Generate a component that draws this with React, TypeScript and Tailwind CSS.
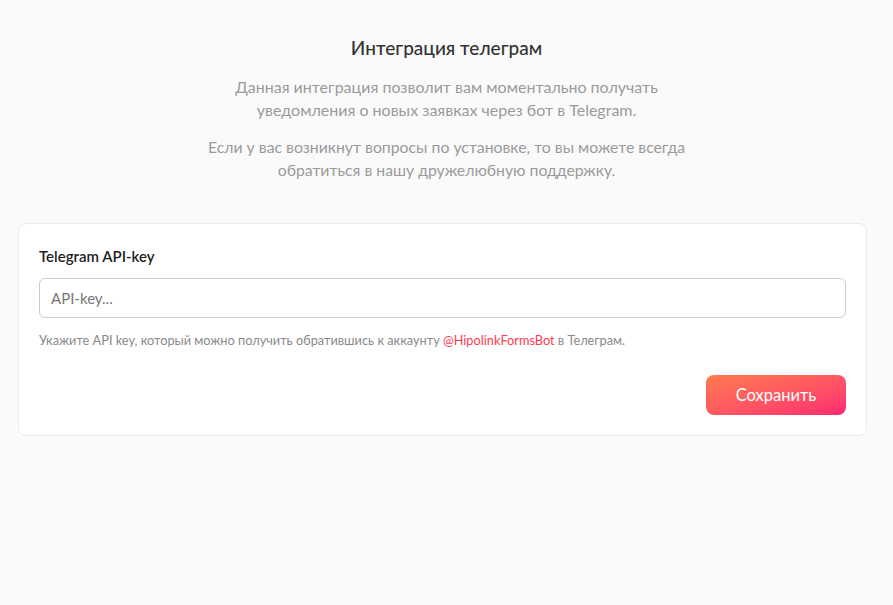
export default function App() {
  return (
    <div
      className="min-h-[605px] w-full bg-[#fafafa] pt-[36px]"
      style={{ fontFamily: '"Lato", "Noto Sans", sans-serif' }}
    >
      <div className="flex flex-col items-center text-center">
        <h1 className="text-[19px] font-medium leading-[24px] text-[#333333]">
          Интеграция телеграм
        </h1>
        <p className="mt-[15px] text-[16px] leading-[23px] text-[#9a9a9a]">
          Данная интеграция позволит вам моментально получать
          <br />
          уведомления о новых заявках через бот в Telegram.
        </p>
        <p className="mt-[14px] text-[15.8px] leading-[23px] text-[#9a9a9a]">
          Если у вас возникнут вопросы по установке, то вы можете всегда
          <br />
          обратиться в нашу дружелюбную поддержку.
        </p>
      </div>

      <div className="ml-[18px] mr-[26px] mt-[42px] rounded-[8px] border border-[#ebebeb] bg-white px-[20px] pb-[20px] pt-[20px]">
        <label className="block text-[15px] font-semibold leading-[24px] text-[#222222]">
          Telegram API-key
        </label>
        <input
          type="text"
          placeholder="API-key..."
          className="mt-[10px] h-[40px] w-full rounded-[6px] border border-[#cccccc] bg-white px-[11px] text-[15px] text-[#333333] outline-none placeholder:text-[#777777]"
        />
        <p className="mt-[13px] text-[12.75px] leading-[18px] text-[#8a8a8a]">
          Укажите API key, который можно получить обратившись к аккаунту{" "}
          <span className="text-[#ff3b50]">@HipolinkFormsBot</span> в Телеграм.
        </p>
        <div className="mt-[26px] flex justify-end">
          <button className="h-[40px] w-[140px] rounded-[8px] bg-gradient-to-br from-[#ff7a4d] to-[#ff2470] text-[16.5px] font-normal text-white">
            Сохранить
          </button>
        </div>
      </div>
    </div>
  );
}
